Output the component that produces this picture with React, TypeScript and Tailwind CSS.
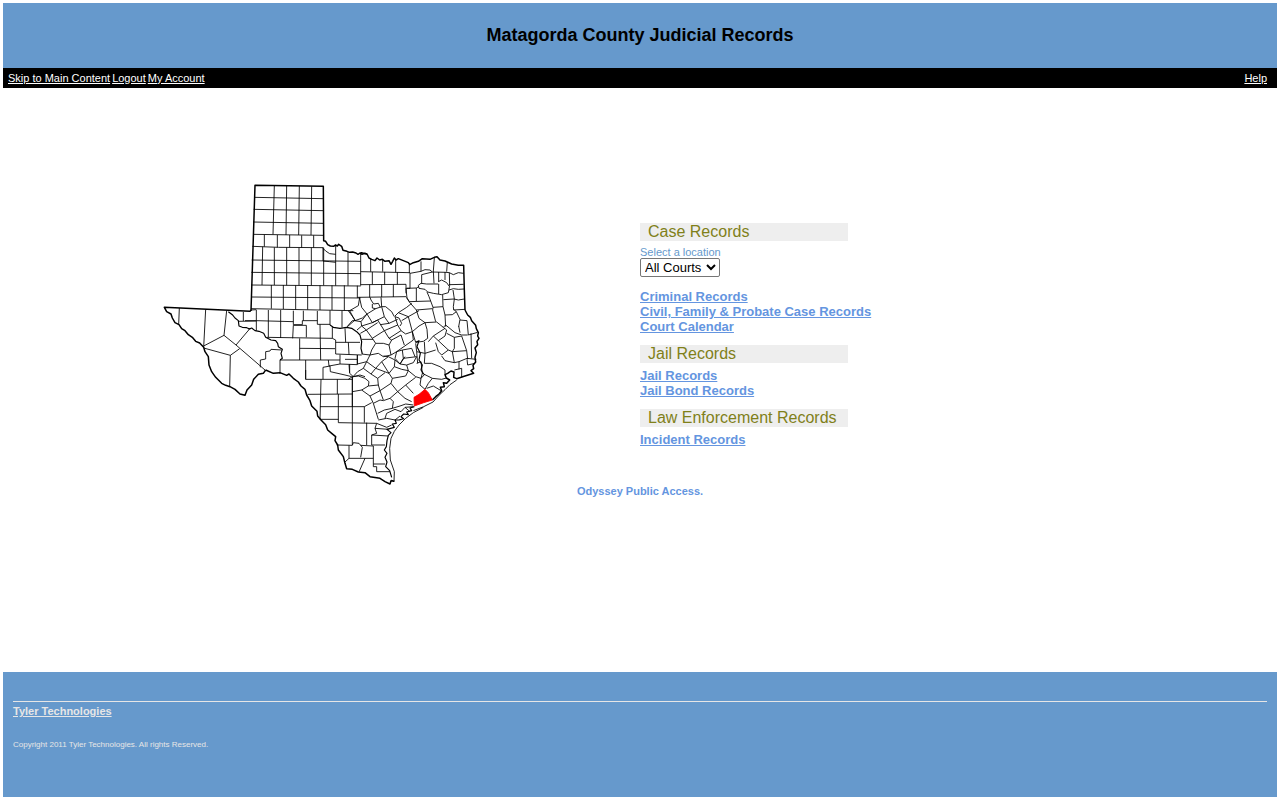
import { useState } from "react";

const navLinks = ["Skip to Main Content", "Logout", "My Account"];

const sections = [
  {
    title: "Case Records",
    hasLocation: true,
    links: [
      "Criminal Records",
      "Civil, Family & Probate Case Records",
      "Court Calendar",
    ],
  },
  { title: "Jail Records", links: ["Jail Records", "Jail Bond Records"] },
  { title: "Law Enforcement Records", links: ["Incident Records"] },
];

export default function App() {
  const [location, setLocation] = useState("All Courts");

  return (
    <div className="flex min-h-screen flex-col bg-white p-[3px] font-['Liberation_Sans',Arial,sans-serif]">
      <header>
        <div className="flex h-[65px] items-center justify-center bg-[#6699cc] pb-0.5">
          <h1 className="text-lg font-bold text-black">
            Matagorda County Judicial Records
          </h1>
        </div>
        <nav className="flex h-5 items-center justify-between bg-black pr-2.5 pl-[5px] text-[11px] text-white">
          <div className="flex gap-0.5">
            {navLinks.map((link) => (
              <a key={link} href="#" className="underline">
                {link}
              </a>
            ))}
          </div>
          <a href="#" className="underline">
            Help
          </a>
        </nav>
      </header>

      <main className="flex-1 pt-[92px]">
        <div className="grid grid-cols-2">
          <div className="flex justify-center">
            <TexasMap />
          </div>
          <div className="flex flex-col gap-[11px] pt-[43px]">
            {sections.map((section) => (
              <section key={section.title}>
                <h2 className="w-52 bg-[#eeeeee] px-2 text-base leading-[18px] whitespace-nowrap text-[#808019]">
                  {section.title}
                </h2>
                {section.hasLocation && (
                  <div className="flex flex-col items-start pt-[5px] pb-[7px]">
                    <label
                      htmlFor="location"
                      className="text-[11px] leading-3 text-[#6699cc]"
                    >
                      Select a location
                    </label>
                    <select
                      id="location"
                      value={location}
                      onChange={(e) => setLocation(e.target.value)}
                      className="h-[19px] w-20 rounded-[2px] border border-[#767676] bg-white text-[13px] text-black"
                    >
                      <option>All Courts</option>
                    </select>
                  </div>
                )}
                <ul className="pt-[5px] text-[13px] leading-[15px] font-bold text-[#6495e0]">
                  {section.links.map((link) => (
                    <li key={link}>
                      <a href="#" className="underline">
                        {link}
                      </a>
                    </li>
                  ))}
                </ul>
              </section>
            ))}
          </div>
        </div>
        <p className="text-center text-[11px] leading-[13px] font-bold text-[#6495e0]">
          Odyssey Public Access.
        </p>
      </main>

      <footer className="h-[125px] bg-[#6699cc] px-2.5 pt-[29px] text-[#e6e6e6]">
        <div className="border-t border-[#e6e6e6] pt-[3px]">
          <a
            href="#"
            className="block text-[11px] leading-[13px] font-bold underline"
          >
            Tyler Technologies
          </a>
          <p className="pt-[22px] text-[8px] leading-[10px]">
            Copyright 2011 Tyler Technologies. All rights Reserved.
          </p>
        </div>
      </footer>
    </div>
  );
}

function TexasMap() {
  return (
    <svg
      viewBox="0 0 999 915"
      className="h-[305px] w-[333px]"
      fill="none"
      stroke="black"
      strokeWidth="2.6"
      strokeLinejoin="round"
      role="img"
      aria-label="Map of Texas counties with Matagorda County highlighted"
    >
      {/* Panhandle */}
      <g transform="translate(270 0)">
        <path d="M27 52L235 56M26 88L235 92M24 126L235 130M24 163L235 166M22 199L100 202L235 203M20 240L347 244M19 277L347 281M18 315L347 318" />
        <path d="M88 17L84 163M125 18L123 165M163 18L161 165M200 19L198 165M58 164V200M97 165V202M134 165V202M170 166V203M206 166V203" />
        <path d="M53 200L51 315M88 202V315M125 202V316M162 203V316M199 203V316M236 203V316M272 194V317M309 216V317M347 222V317" />
        <path d="M234 205l8 8l12 8l18 2M234 203V243l20 2l18 2" />
        <path
          strokeWidth="4.5"
          d="M18 393L30 16L235 19L236 182l6 2l6 10l8 4l10 1l5 -4l6 3l4 -5l9 6l4 12l12 3l8 3l9 -1l10 3l6 4l6 -4l6 4l8 -3l7 2"
        />
      </g>

      {/* Red River and northeast */}
      <g transform="translate(570 150)">
        <path d="M47 125L195 128M47 164L183 163M38 202L183 200M77 85V125M113 88V125M152 88V127M193 104V130M82 126V163M119 126V163M157 126V163M74 164V202M110 164V201M145 164V201M183 163V190" />
        <path d="M195 130L228 124V94M228 124L240 119L255 120L262 126M268 84L265 123M230 134L262 126L303 127M230 134V160M195 130V175H184M220 166L228 160L245 162H280M265 123L267 160M307 96L305 125M281 126V155M300 126V150M280 155L290 150L305 158L312 168M313 128L314 166M303 127L313 128L325 134L340 128L356 130M312 164L356 163M312 180L325 176L340 178L357 177" />
        <path d="M220 166L222 175L240 178L248 186L265 190L290 194L310 188L314 166M281 162V192M184 175L214 174V213M214 174L222 170M183 175L186 205L192 213M192 215L257 213M246 186L252 200L257 213L264 232L263 240L272 275M293 195L294 230L264 232M295 209L327 207L340 210L358 207M324 180L328 207L325 230L326 240L360 238M294 230L300 255L302 290M300 255L322 254L334 245L328 240M334 245L345 268L341 290" />
        <path
          strokeWidth="4.5"
          d="M56 70L48 68L66 72L72 84L80 88L90 92L96 84L104 90L112 88L120 94L132 92L138 103L143 94L148 84L153 90L160 86L175 92L190 98L194 104L205 98L220 94L232 86L255 88L268 82L276 80L285 90L300 93L320 102L340 106H356L358 180L360 240"
        />
      </g>

      {/* Trans-Pecos */}
      <g transform="translate(0 330)">
        <path d="M73 54L71 104M152 58L146 172M215 62L207 136L146 168M207 136L243 165L330 240M146 174L226 196L254 176M226 196L224 290M243 165L282 119M265 66V93M250 94L304 93M288 60L304 59" />
        <path
          strokeWidth="3.5"
          d="M220 65L232 74L240 84L250 92L252 108L262 112L275 113L286 118"
        />
        <path
          strokeWidth="4.5"
          d="M288 60L285 64L28 52L35 65L48 72L52 84L60 98L72 104L80 116L90 122L100 134L112 142L122 154L134 159L146 172L150 185L160 200L162 225L170 245L182 262L200 280L212 286L225 290L240 298L255 312L270 316L276 300L290 285L296 268L310 253L325 250L332 240"
        />
      </g>

      {/* Permian Basin and Edwards Plateau */}
      <g transform="translate(270 300)">
        <path d="M20 51L347 54M18 86L325 92M34 122L145 125M0 122H34M79 15V86M115 15V87M152 16V88M188 16V89M225 16V90M261 16V90M298 16V91M337 17V54" />
        <path d="M34 90V152M70 90V172M107 90V174M145 92V134H172V122H217M175 92V122M217 93V133H255M255 91V135M291 92V142M145 136L143 175M145 136H184V172M225 133L227 240" />
        <path d="M65 172L262 175M164 175V240M164 205L270 206M105 240H285M262 140V175L272 180V222L350 225M300 145L302 187M272 187H345M310 187L312 223M285 224V252L337 254V225M250 240L252 258L285 252M234 298V262L255 258L256 275L300 285L320 290M182 240V298M312 254L314 280L325 290L345 285L360 290" />
        <path d="M310 92L330 120L305 142M105 240V282M110 210L78 208L75 213L62 215V237L46 240V262" />
        <path
          strokeWidth="3.5"
          d="M10 148L20 144L30 152L42 154L56 160L62 172L78 180L92 182L98 190L100 200L112 208L108 220L112 235L105 240M255 135L265 142L285 145L305 142L320 145L335 155L345 165L350 185L348 205L352 222"
        />
        <path
          strokeWidth="4.5"
          d="M62 270L85 280L105 278L125 286L132 282L145 295L160 306L168 318L180 328"
        />
      </g>

      {/* Blackland prairie */}
      <g transform="translate(570 330)">
        <path d="M10 62L14 62L40 47L44 22M14 62L30 92L52 84L66 72L50 52L44 25M30 92L22 92L8 108M75 22L78 30L86 42L100 40L106 52M108 22L110 50M82 42L82 54L92 56M30 92L48 95L66 72M48 95L50 108L36 120M66 72L82 98L118 80L110 50L92 56ZM50 108L82 98M50 108L64 120L98 98M82 98L98 90L118 122L82 145L64 120L46 130" />
        <path d="M118 80L132 100L158 88M106 104L132 100M118 122L158 105L150 80M148 80L140 65L122 50H110M118 122L132 145L168 122L158 105M150 80L162 84L170 100L165 108M160 68L190 80L202 125L182 132L168 122M150 78L160 68L185 52L200 40M170 92L190 80L222 62M185 22L192 35L214 60L222 85L240 98L222 108L202 125M214 60L262 56" />
        <path d="M132 145L140 150L168 135M140 150L132 165L138 195L155 185L205 150L202 125M168 135L178 165M82 145L92 160L115 160L132 165M50 148H84M92 160L80 180L75 195L100 190L115 200L138 195M50 192L75 195M155 185L172 180L200 175L210 200M155 185L150 205L165 222M172 180L175 205L215 200M175 205L165 222M240 98L275 96L295 112M240 98L246 118L248 145L235 154L212 157L202 125" />
      </g>

      {/* Piney Woods and upper coast */}
      <g transform="translate(570 360)">
        <path d="M302 75L295 82M302 75L330 98L350 105L368 105M295 82L305 90L300 108L280 122L265 108L300 85M341 78L345 98M345 60L366 62L370 105L398 97M250 125L265 108M280 122L310 150L322 155M305 100L328 112L350 108M328 112V145L322 155L365 152M350 108L365 152L368 178M378 100L380 175M310 150L290 165L280 155L272 128M322 155L328 188L300 182L290 168M328 188L342 185L366 175L394 178M342 185V208M328 210L350 205V232M366 178L368 195L390 190" />
        <path d="M228 235L225 255L240 268M215 190L228 185L232 220L228 235M212 130L215 155L218 190M238 125L240 160L238 190M215 155L240 160L272 150M238 190H260L285 200L300 210V224M228 235L240 222M262 235L250 250L240 268M232 220L262 235L290 238L304 234M245 265L265 258L288 272" />
        <path
          strokeWidth="3.5"
          d="M212 127L222 122L216 140L226 160L222 180L232 195L228 210L236 222"
        />
        <path
          strokeWidth="4.5"
          d="M360 30L368 45L376 52L380 62L392 76L394 86L400 98L398 108L402 115L396 124L398 134L390 144L394 158L390 172L392 186L384 196L386 206L378 212L386 220L360 228L335 236L326 232L327 216L318 213L308 220L300 224L304 234L314 240L305 250L295 248L298 260L286 262L290 272L282 282L272 290L262 300"
        />
        <path d="M335 240L315 254L300 269L284 284L264 306L236 320L205 332" />
        <path
          fill="#ff0000"
          stroke="#ff0000"
          d="M240 268L250 278L262 300L236 308L208 318L207 292L222 283Z"
        />
      </g>

      {/* Between Austin, San Antonio and Victoria */}
      <g transform="translate(570 510)">
        <path d="M75 15L65 35L55 55L38 65L24 80M37 15V42L65 35M65 35L92 55L110 35L130 20L115 18M110 35L132 70L92 55L78 72L55 55M130 20L150 30L148 50L132 70M150 30L165 42L185 45L205 38L215 20M165 42L180 20M148 50L170 58L190 62L212 80L228 85M185 45L190 62" />
        <path d="M132 70L142 85L182 78L190 62M142 85L138 100L158 125L182 105L212 82M158 125L180 145L200 155M182 105L205 130M22 80L40 78L60 85L72 95L70 108L50 120L22 125M70 108L100 105L98 85L78 72M100 105L105 122L138 100M105 122L75 138L50 120M98 85L120 68" />
        <path d="M75 138L85 160L105 150L115 152L135 145L158 125M85 160L100 208M135 145L145 155L142 175L118 180L98 190M142 175L165 168L182 162L205 165M105 122L115 150M58 170L80 158M22 80V170M0 28H37M14 42V68" />
      </g>

      {/* South Texas and Gulf coast */}
      <g transform="translate(420 570)">
        <path d="M32 0V28H172M78 28L75 148H130M127 28V72M38 73L172 72M172 20V225M75 110H208V158M130 72V158L245 160M215 158V225M125 225L172 226L175 218L192 220L202 232L197 262M162 226V265M150 276L162 265H235M197 226L235 228M245 160L240 175L245 190L230 195V225M230 195L280 198M230 225H270M235 228V290H245V305H285M235 282H270M210 265L192 306M160 28L172 20" />
        <path d="M250 150L275 145L300 150L315 138M270 145L275 130L300 118L318 125L330 112L355 110M245 160L275 172L290 165M240 175L280 178M330 112L345 125" />
        <path
          strokeWidth="3.5"
          d="M358 110L345 114L350 122L335 126L340 134L326 132L318 140L326 146L312 150L300 150L304 160L292 162L298 172L276 178L288 188L280 196L276 212L274 230L268 240L276 250L270 262L276 276L272 290L284 302L290 322"
        />
        <path d="M385 112L355 128L332 145L312 165L298 184L288 205L284 235L286 270L298 305L297 335L290 330" />
        <path
          strokeWidth="4.5"
          d="M30 58L35 75L45 92L50 108L66 124L68 138L78 150L92 164L98 180L110 190L122 200L120 212L128 225L130 240L145 260L150 280L155 296L172 298L190 306L210 308L225 320L255 325L270 335L285 342L288 332L298 334"
        />
      </g>
    </svg>
  );
}
